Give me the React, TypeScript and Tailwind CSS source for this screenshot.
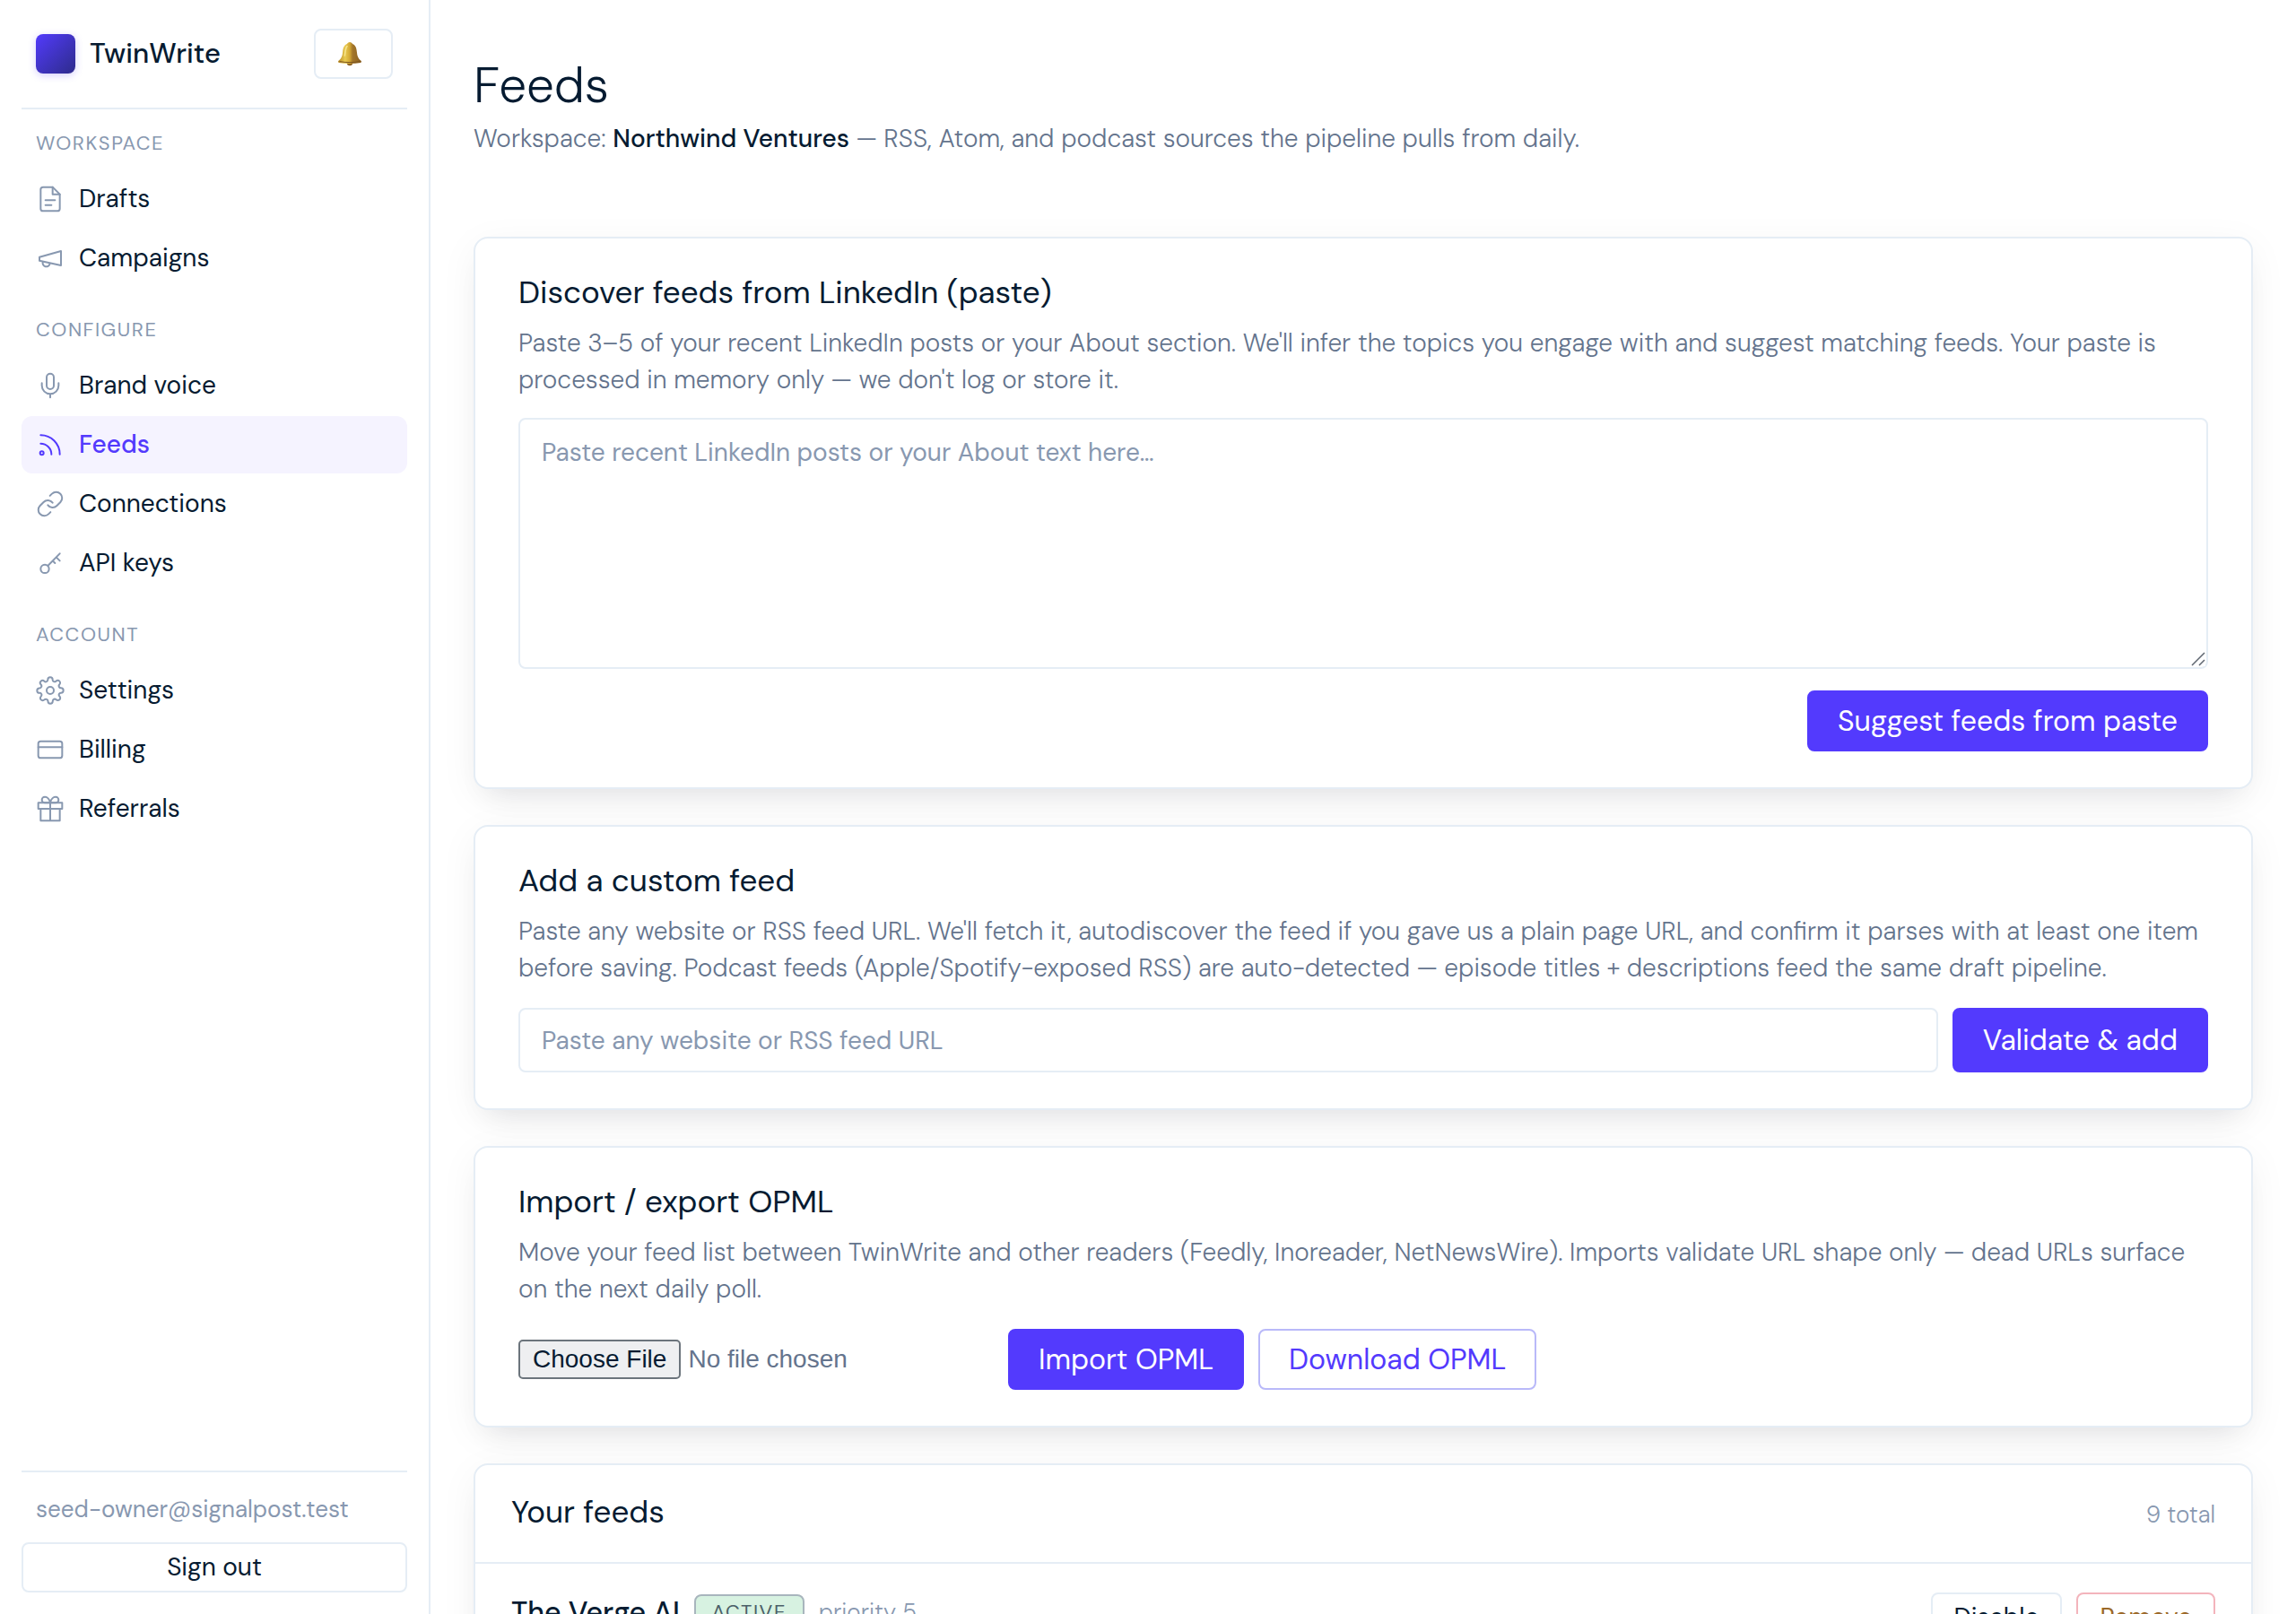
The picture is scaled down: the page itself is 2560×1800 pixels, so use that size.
import type { ReactNode } from "react";

const icons: Record<string, ReactNode> = {
  drafts: (
    <>
      <path d="M14 2H6a2 2 0 0 0-2 2v16a2 2 0 0 0 2 2h12a2 2 0 0 0 2-2V8z" />
      <path d="M14 2v6h6M8 13h8M8 17h5" />
    </>
  ),
  campaigns: (
    <>
      <path d="m3 11 18-5v12L3 14v-3z" />
      <path d="M11.6 16.8a3 3 0 1 1-5.8-1.6" />
    </>
  ),
  voice: (
    <>
      <path d="M12 2a3 3 0 0 0-3 3v7a3 3 0 0 0 6 0V5a3 3 0 0 0-3-3z" />
      <path d="M19 10v2a7 7 0 0 1-14 0v-2M12 19v3" />
    </>
  ),
  feeds: (
    <>
      <path d="M4 11a9 9 0 0 1 9 9M4 4a16 16 0 0 1 16 16" />
      <circle cx="5" cy="19" r="1.5" />
    </>
  ),
  connections: (
    <>
      <path d="M10 13a5 5 0 0 0 7.54.54l3-3a5 5 0 0 0-7.07-7.07l-1.72 1.71" />
      <path d="M14 11a5 5 0 0 0-7.54-.54l-3 3a5 5 0 0 0 7.07 7.07l1.71-1.71" />
    </>
  ),
  keys: (
    <>
      <circle cx="7.5" cy="16.8" r="3.5" />
      <path d="M10 14.300 20 4M17 7l3 3M14 10l2 2" />
    </>
  ),
  settings: (
    <>
      <circle cx="12" cy="12" r="3" />
      <path d="M19.4 15a1.65 1.65 0 0 0 .33 1.82l.06.06a2 2 0 1 1-2.83 2.83l-.06-.06a1.65 1.65 0 0 0-2.8 1.17V21a2 2 0 1 1-4 0v-.09A1.65 1.65 0 0 0 9 19.4a1.65 1.65 0 0 0-1.82.33l-.06.06a2 2 0 1 1-2.83-2.83l.06-.06a1.65 1.65 0 0 0-1.17-2.8H3a2 2 0 1 1 0-4h.09A1.65 1.65 0 0 0 4.6 9a1.65 1.65 0 0 0-.33-1.82l-.06-.06a2 2 0 1 1 2.83-2.83l.06.06A1.65 1.65 0 0 0 9 4.6a1.65 1.65 0 0 0 1-1.51V3a2 2 0 1 1 4 0v.09a1.65 1.65 0 0 0 2.82 1.17l.06-.06a2 2 0 1 1 2.83 2.83l-.06.06A1.65 1.65 0 0 0 19.4 9a1.65 1.65 0 0 0 1.51 1H21a2 2 0 1 1 0 4h-.09a1.65 1.65 0 0 0-1.51 1z" />
    </>
  ),
  billing: (
    <>
      <rect x="2" y="5" width="20" height="14" rx="2" />
      <path d="M2 10h20" />
    </>
  ),
  referrals: (
    <>
      <path d="M20 12v10H4V12M2 7h20v5H2zM12 22V7" />
      <path d="M12 7H7.5a2.5 2.5 0 1 1 0-5C11 2 12 7 12 7zM12 7h4.5a2.5 2.5 0 1 0 0-5C13 2 12 7 12 7z" />
    </>
  ),
};

const nav = [
  { label: "Workspace", items: [["drafts", "Drafts"], ["campaigns", "Campaigns"]] },
  {
    label: "Configure",
    items: [["voice", "Brand voice"], ["feeds", "Feeds"], ["connections", "Connections"], ["keys", "API keys"]],
  },
  { label: "Account", items: [["settings", "Settings"], ["billing", "Billing"], ["referrals", "Referrals"]] },
];

function NavItem({ icon, label, active }: { icon: string; label: string; active: boolean }) {
  return (
    <a
      href={`#${icon}`}
      aria-current={active ? "page" : undefined}
      className={`flex h-16 items-center gap-4 rounded-xl px-4 text-[28px] leading-10 ${
        active ? "bg-[#f5f3ff] font-medium text-[#533afd]" : "text-[#061b31]"
      }`}
    >
      <svg
        viewBox="0 0 24 24"
        className={`size-8 shrink-0 ${active ? "text-[#533afd]" : "text-[#8898b0]"}`}
        fill="none"
        stroke="currentColor"
        strokeWidth="1.5"
        strokeLinecap="round"
        strokeLinejoin="round"
        aria-hidden="true"
      >
        {icons[icon]}
      </svg>
      {label}
    </a>
  );
}

function BellIcon() {
  return (
    <svg viewBox="0 0 28 28" className="mr-2 size-7" aria-hidden="true">
      <defs>
        <linearGradient id="bell" x1="0" x2="1" y1="0" y2="0">
          <stop offset="0" stopColor="#b98a26" />
          <stop offset="0.3" stopColor="#e9cb52" />
          <stop offset="0.5" stopColor="#d3a835" />
          <stop offset="0.62" stopColor="#a3762a" />
          <stop offset="1" stopColor="#8a5f22" />
        </linearGradient>
      </defs>
      <circle cx="14" cy="24" r="3.2" fill="#8f6424" />
      <path
        d="M14 1c1.700 0 2.600 1 3 2 3.300 1.300 4.600 4.600 4.900 9 .3 4.600 1.600 7.400 4.600 9.800.8.700.6 2-.5 2.200-7.500 1.400-16.500 1.400-24 0-1.100-.2-1.300-1.500-.5-2.200C4.500 19.400 5.800 16.600 6.100 12c.3-4.400 1.600-7.700 4.900-9 .4-1 1.300-2 3-2z"
        fill="url(#bell)"
      />
      <path d="M2.500 22.600c7 1.300 16 1.300 23 0" fill="none" stroke="#7a5420" strokeWidth="1" />
      <path d="M11 5.500c-2 2.500-2 7-2.600 10.500" fill="none" stroke="#f6e38a" strokeWidth="1.600" strokeLinecap="round" />
    </svg>
  );
}

const cardClass =
  "rounded-2xl border-2 border-[#e5edf5] bg-white shadow-[0_10px_44px_rgba(23,23,23,0.05),0_20px_32px_-18px_rgba(23,23,40,0.10)]";
const primaryClass = "rounded-lg border-2 border-[#533afd] bg-[#533afd] px-8 text-[32px] leading-8 text-white";
const smallClass = "h-14 rounded-lg border-2 bg-white px-6 text-[28px] leading-9";
const fieldClass =
  "rounded-lg border-2 border-[#e5edf5] bg-white px-6 text-[28px] text-[#061b31] placeholder:text-[#8898b0] placeholder:opacity-100";

function Card({ title, text, children }: { title: string; text: string; children: ReactNode }) {
  return (
    <section className={`${cardClass} px-12 py-10`}>
      <h2 className="mb-4 text-[35px] leading-10 text-[#061b31]">{title}</h2>
      <p className="text-[28px] leading-[41px] font-light text-[#64748d]">{text}</p>
      {children}
    </section>
  );
}

export default function App() {
  return (
    <div className="flex h-screen overflow-hidden bg-white font-['DM_Sans','Inter',sans-serif] text-[#061b31]">
      <aside className="flex w-[480px] shrink-0 flex-col border-r-2 border-[#e5edf5] px-6 pt-8 pb-6">
        <div className="flex items-center border-b-2 border-[#e5edf5] px-4 pb-8">
          <span className="size-11 rounded-lg bg-linear-135 from-[#533afd] to-[#2e2b8c] shadow-[0_2px_8px_rgba(83,58,253,0.25)]" />
          <span className="ml-4 text-[31px] leading-10 font-medium">TwinWrite</span>
          <button
            type="button"
            aria-label="Notifications"
            className="ml-auto flex h-14 w-[88px] items-center justify-center rounded-lg border-2 border-[#e5edf5]"
          >
            <BellIcon />
          </button>
        </div>

        <nav className="flex flex-col gap-8 pt-[22px]">
          {nav.map((group) => (
            <div key={group.label} className="flex flex-col gap-0.5">
              <h3 className="mb-3 px-4 text-[22px] leading-8 font-normal tracking-[0.07em] text-[#8898b0] uppercase">
                {group.label}
              </h3>
              {group.items.map(([icon, label]) => (
                <NavItem key={icon} icon={icon} label={label} active={icon === "feeds"} />
              ))}
            </div>
          ))}
        </nav>

        <div className="mt-auto flex flex-col border-t-2 border-[#e5edf5] pt-[22px]">
          <p className="mb-[18px] px-4 text-[26px] leading-[38px] text-[#8898b0]">seed-owner@signalpost.test</p>
          <button type="button" className={`${smallClass} border-[#e5edf5]`}>
            Sign out
          </button>
        </div>
      </aside>

      <main className="flex min-w-0 flex-1 flex-col gap-10 overflow-y-auto px-12 pt-16 pb-12 [scrollbar-width:none]">
        <header className="mb-[49px]">
          <h1 className="mb-2 text-[55px] leading-[62px] font-light">Feeds</h1>
          <p className="text-[28px] leading-[41px] font-light text-[#64748d]">
            Workspace: <strong className="font-medium text-[#061b31]">Northwind Ventures</strong> — RSS, Atom, and
            podcast sources the pipeline pulls from daily.
          </p>
        </header>

        <Card
          title="Discover feeds from LinkedIn (paste)"
          text="Paste 3–5 of your recent LinkedIn posts or your About section. We'll infer the topics you engage with and suggest matching feeds. Your paste is processed in memory only — we don't log or store it."
        >
          <form className="mt-[22px] flex flex-col items-end gap-6">
            <div className="relative flex w-full">
              <textarea
                aria-label="LinkedIn posts or About text"
                placeholder="Paste recent LinkedIn posts or your About text here…"
                className={`${fieldClass} h-[280px] w-full resize-y py-4 leading-[41px]`}
              />
              <svg
                viewBox="0 0 16 16"
                className="pointer-events-none absolute right-[3px] bottom-[3px] size-4 bg-white"
                fill="none"
                stroke="#5f6670"
                strokeWidth="1.5"
                aria-hidden="true"
              >
                <path d="M1 15 15 1M9 15l6-6" />
              </svg>
            </div>
            <button type="button" className={`${primaryClass} h-[68px]`}>
              Suggest feeds from paste
            </button>
          </form>
        </Card>

        <Card
          title="Add a custom feed"
          text="Paste any website or RSS feed URL. We'll fetch it, autodiscover the feed if you gave us a plain page URL, and confirm it parses with at least one item before saving. Podcast feeds (Apple/Spotify-exposed RSS) are auto-detected — episode titles + descriptions feed the same draft pipeline."
        >
          <form className="mt-6 flex gap-4">
            <input
              type="url"
              aria-label="Feed URL"
              placeholder="Paste any website or RSS feed URL"
              className={`${fieldClass} h-[72px] min-w-0 flex-1`}
            />
            <button type="button" className={primaryClass}>
              Validate &amp; add
            </button>
          </form>
        </Card>

        <Card
          title="Import / export OPML"
          text="Move your feed list between TwinWrite and other readers (Feedly, Inoreader, NetNewsWire). Imports validate URL shape only — dead URLs surface on the next daily poll."
        >
          <form className="mt-6 flex items-center gap-4">
            <input
              type="file"
              aria-label="OPML file"
              className="w-[530px] font-['Liberation_Sans',sans-serif] text-[28px] leading-10 text-[#64748d] file:mr-2 file:h-11 file:rounded-[5px] file:border-2 file:border-solid file:border-[#6b747c] file:bg-[#eeeff1] file:px-3.5 file:text-[#061b31]"
            />
            <button type="button" className={`${primaryClass} h-[68px]`}>
              Import OPML
            </button>
            <button
              type="button"
              className="h-[68px] rounded-lg border-2 border-[#b9b9f9] bg-white px-8 text-[32px] leading-8 text-[#533afd]"
            >
              Download OPML
            </button>
          </form>
        </Card>

        <section className={cardClass}>
          <header className="flex items-baseline justify-between border-b-2 border-[#e5edf5] px-10 pt-8 pb-9">
            <h2 className="text-[35px] leading-10">Your feeds</h2>
            <span className="text-[26px] leading-8 font-light text-[#8898b0]">9 total</span>
          </header>
          <ul>
            <li className="flex items-start justify-between px-10 py-8">
              <div className="flex items-center gap-4">
                <span className="text-[32px] leading-[44px] font-medium">The Verge AI</span>
                <span className="rounded-lg border-2 border-[#a8b5bd] bg-[#d7f2e1] px-[18px] text-[22px] leading-9 tracking-[0.07em] text-[#4b6068]">
                  ACTIVE
                </span>
                <span className="text-[26px] leading-9 font-light text-[#8898b0]">priority 5</span>
              </div>
              <div className="flex gap-4">
                <button type="button" className={`${smallClass} border-[#e5edf5]`}>
                  Disable
                </button>
                <button type="button" className={`${smallClass} border-[#f3b4bc] text-[#9b6829]`}>
                  Remove
                </button>
              </div>
            </li>
          </ul>
        </section>
      </main>
    </div>
  );
}
